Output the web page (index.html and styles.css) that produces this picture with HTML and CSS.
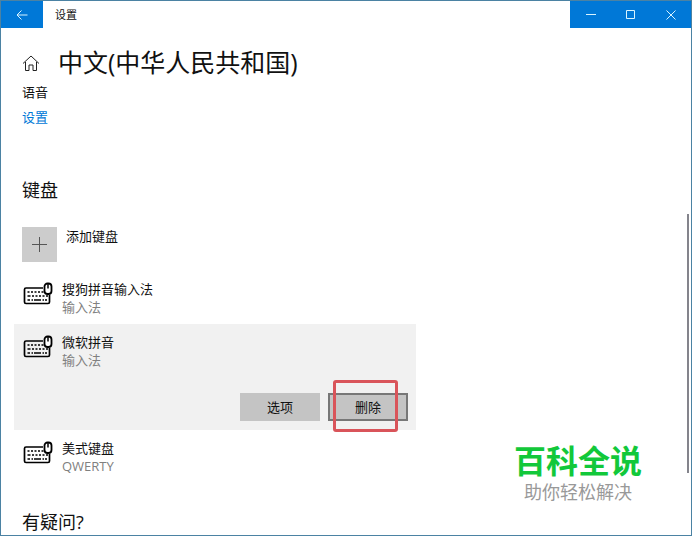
FILE: index.html
```
<!DOCTYPE html>
<html lang="zh-CN">
    <head>
        <meta charset="utf-8">
        <title>设置</title>
        <meta name="viewport" content="width=device-width, initial-scale=1.0">
        <link rel="stylesheet" href="styles.css">
    </head>
    <body>
        <svg class="defs" width="0" height="0">
            <symbol id="keyboard" viewBox="0 0 30 24">
                <path d="M20 6H3Q1.500 6 1.500 7.500V20Q1.500 21.500 3 21.500H25Q26.500 21.500 26.500 20V13" fill="none" stroke="#000" stroke-width="1.700"/>
                <path d="M4.500 10h2m1.500 0h2m1.500 0h2m1.500 0h2m1.500 0h2M4.500 14h3m1.500 0h2m1.500 0h2m1.500 0h2m1.500 0h2m1.500 0h2M4.500 18h2.500m1.500 0h1.500M11 18h7M19.500 18h1.500m1 0h2" fill="none" stroke="#000" stroke-width="1.700"/>
                <rect x="21.500" y="1.500" width="7" height="10.500" rx="3" fill="#fff" stroke="#000" stroke-width="1.800"/>
                <path d="M25 2v4.500" stroke="#000" stroke-width="1.500"/>
            </symbol>
        </svg>
        <div class="window">
            <header class="titlebar">
                <button class="back" aria-label="返回">
                    <svg width="12" height="10" viewBox="0 0 12 10"><path d="M11.500 5H1M5.500 .5L1 5l4.500 4.500"/></svg>
                </button>
                <span class="caption">设置</span>
                <div class="controls">
                    <button aria-label="最小化"><svg width="10" height="10" viewBox="0 0 10 10"><path d="M0 4.500h10"/></svg></button>
                    <button aria-label="最大化"><svg width="10" height="10" viewBox="0 0 10 10"><path d="M.5 .5h8v8h-8z"/></svg></button>
                    <button aria-label="关闭"><svg width="10" height="10" viewBox="0 0 10 10"><path d="M.5 .5l9 9M9.500 .5l-9 9"/></svg></button>
                </div>
            </header>
            <main>
                <div class="heading">
                    <svg width="18" height="18" viewBox="0 0 18 18"><path d="M1 9.500L9 2l8 7.500M3.500 8V16.500H7V11h4v5.500h3.500V8"/></svg>
                    <h1>中文(中华人民共和国)</h1>
                </div>
                <div class="line">语音</div>
                <a class="line link" href="#">设置</a>

                <h2>键盘</h2>
                <button class="add">
                    <span class="plus"><svg width="15" height="15" viewBox="0 0 15 15"><path d="M7.500 0v15M0 7.500h15"/></svg></span>
                    <span class="add-text">添加键盘</span>
                </button>
                <ul class="keyboards">
                    <li>
                        <svg class="icon"><use href="#keyboard"/></svg>
                        <div class="name">搜狗拼音输入法<small>输入法</small></div>
                    </li>
                    <li class="selected">
                        <svg class="icon"><use href="#keyboard"/></svg>
                        <div class="name">微软拼音<small>输入法</small></div>
                        <div class="actions">
                            <button>选项</button>
                            <button class="delete">删除</button>
                        </div>
                    </li>
                    <li>
                        <svg class="icon"><use href="#keyboard"/></svg>
                        <div class="name">美式键盘<small>QWERTY</small></div>
                    </li>
                </ul>
                <h2 class="help">有疑问?</h2>
            </main>
            <div class="scrollbar"></div>
            <div class="watermark">
                <strong>百科全说</strong>
                <span>助你轻松解决</span>
            </div>
        </div>
    </body>
</html>
```
FILE: styles.css
```
* {box-sizing:border-box;}
body {margin:0;background:#fff;color:#111;font:13px/18px "Open Sans","Noto Sans CJK SC",sans-serif;}
button {font:inherit;color:inherit;border:0;padding:0;}
svg {fill:none;stroke:#222;}
.defs {position:absolute;}
.window {position:relative;height:100vh;overflow:hidden;border:1px solid #4b82a3;}

.titlebar {display:flex;height:27px;}
.titlebar button {background:#0078d7;display:flex;align-items:center;justify-content:center;}
.titlebar svg {stroke:#d8f4ff;}
.titlebar .back {width:42px;}
.caption {flex:1;padding-left:12px;font-size:11px;line-height:27px;}
.controls {display:flex;background:#0078d7;padding-left:1px;}
.controls button {width:40px;}

main {padding:17px 13px 0;}
.heading {display:flex;align-items:center;height:35px;padding-left:8px;gap:18px;}
h1, h2 {margin:0;font-weight:400;}
h1 {font-size:25px;line-height:35px;}
.line {display:block;width:fit-content;margin-left:8px;line-height:24px;margin-bottom:1px;}
.link {color:#0078d7;text-decoration:none;}
h2 {margin:49px 8px 25px;font-size:18px;line-height:24px;}
.add {display:flex;margin-left:8px;gap:9px;background:none;}
.plus {width:35px;height:35px;background:#ccc;display:flex;align-items:center;justify-content:center;}
.plus svg {stroke:#555;}
.add-text {line-height:18px;}

.keyboards {list-style:none;margin:9px 0 0;padding:0;max-width:402px;}
.keyboards li {display:flex;flex-wrap:wrap;padding:9px 8px 8px 9px;}
.keyboards .selected {background:#f1f1f1;padding-bottom:9px;}
.icon {width:30px;height:24px;margin:2px 9px 0 0;stroke:none;}
.name {flex:1;}
.name small {display:block;font-size:13px;color:#808080;}
.actions {width:100%;display:flex;justify-content:flex-end;gap:8px;margin-top:24px;}
.actions button {width:80px;height:28px;background:#c4c4c4;}
.actions .delete {position:relative;border:2px solid #777;}
.delete::after {content:"";position:absolute;box-sizing:border-box;left:3px;top:-15px;width:65px;height:52px;border:3px solid #d9545a;border-radius:3px;}
.help {margin:27px 8px 0;}

.scrollbar {position:absolute;right:2px;top:213px;width:2px;height:259px;background:#84848c;}
.watermark {position:absolute;right:49px;bottom:31px;display:flex;flex-direction:column;align-items:center;color:#999;font-size:18px;line-height:24px;}
.watermark strong {color:#12c83a;font-size:32px;line-height:38px;}
```
